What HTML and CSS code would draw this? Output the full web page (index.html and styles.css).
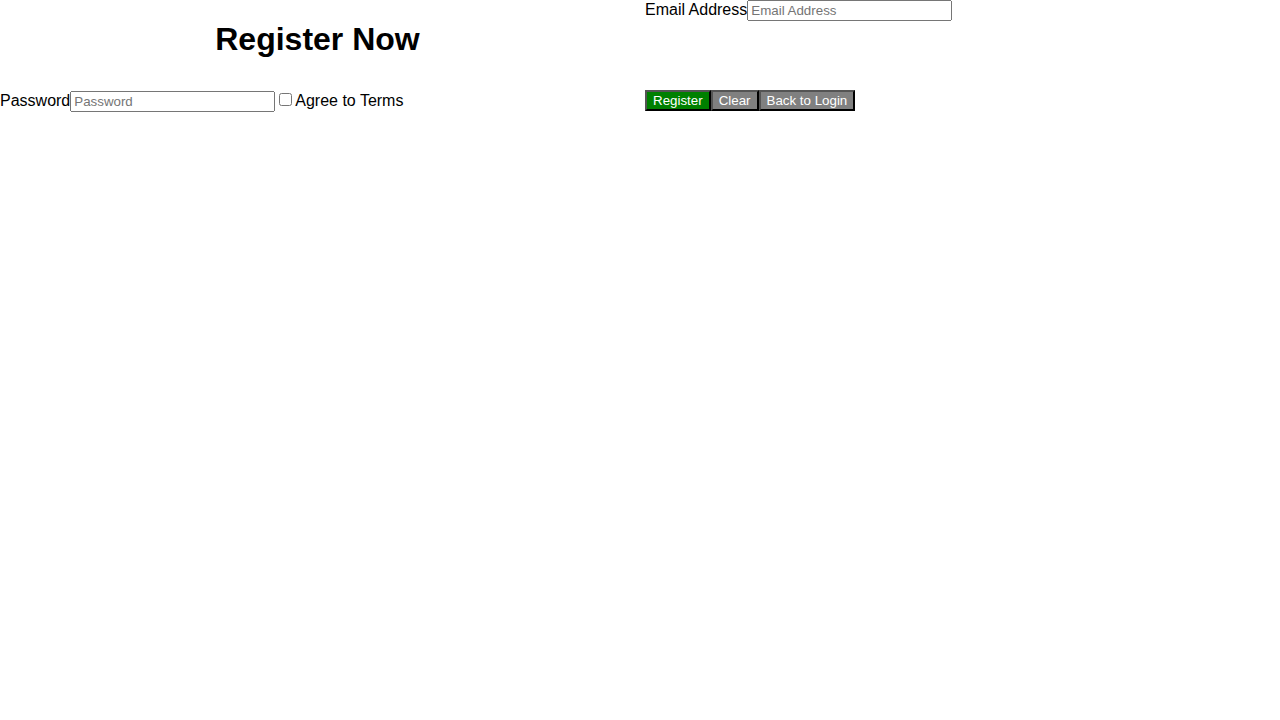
FILE: index.html
```html
<!DOCTYPE html>
<html lang="en">
<head>
<meta charset="utf-8">
<title>Register</title>
<link rel="stylesheet" href="styles.css">
</head>
<body>
<form class="register-grid">
<h1 class="title">Register Now</h1>
<div class="field"><label for="email">Email Address</label><input id="email" class="text-input" type="email" placeholder="Email Address"></div>
<div class="field"><label for="password">Password</label><input id="password" class="text-input" type="password" placeholder="Password"><input id="terms" type="checkbox"><label for="terms">Agree to Terms</label></div>
<div class="actions"><button type="submit" class="btn btn-primary">Register</button><button type="reset" class="btn btn-secondary">Clear</button><button type="button" class="btn btn-secondary">Back to Login</button></div>
</form>
</body>
</html>
```
FILE: styles.css
```css
body {
  margin: 0;
  font-family: "Liberation Sans", Arial, sans-serif;
  color: #000;
  background: #fff;
}

.register-grid {
  display: grid;
  grid-template-columns: 1fr 1fr;
  gap: 10px;
}

.title {
  text-align: center;
}

.text-input {
  width: 197px;
}

.btn {
  font-family: "Liberation Sans", Arial, sans-serif;
  color: #fff;
}

.btn-primary {
  background-color: #008000;
}

.btn-secondary {
  background-color: #808080;
}
```
